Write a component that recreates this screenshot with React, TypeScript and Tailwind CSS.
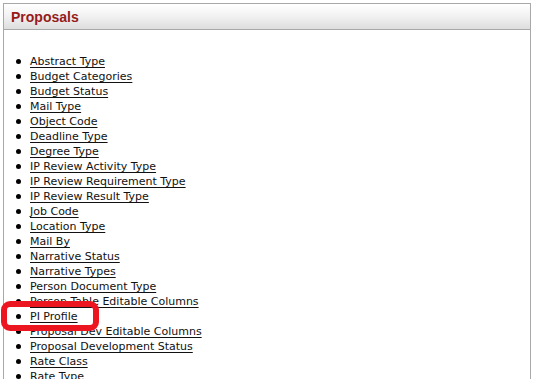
import React from "react";

const items = [
  "Abstract Type",
  "Budget Categories",
  "Budget Status",
  "Mail Type",
  "Object Code",
  "Deadline Type",
  "Degree Type",
  "IP Review Activity Type",
  "IP Review Requirement Type",
  "IP Review Result Type",
  "Job Code",
  "Location Type",
  "Mail By",
  "Narrative Status",
  "Narrative Types",
  "Person Document Type",
  "Person Table Editable Columns",
  "PI Profile",
  "Proposal Dev Editable Columns",
  "Proposal Development Status",
  "Rate Class",
  "Rate Type",
];

export default function App() {
  return (
    <div className="relative w-[541px] h-[379px] overflow-hidden bg-white">
      <div className="ml-[3px] mt-[3px] w-[528px] h-[400px] border border-b-0 border-[#a8a8a8]">
        <div className="h-[26px] flex items-center px-[7px] border-b border-[#a8a8a8] bg-gradient-to-b from-white via-[#f1f1f1] to-[#dedede]">
          <h2 className="font-['Liberation_Sans',Arial,sans-serif] font-bold text-[14px] text-[#961b1b] leading-none">
            Proposals
          </h2>
        </div>
        <ul className="pt-[24px] font-['DejaVu_Sans',Verdana,sans-serif] text-[11px] leading-[15px] text-[#111]">
          {items.map((t) => (
            <li key={t} className="flex items-center h-[15px]">
              <span className="ml-[12px] w-[5px] h-[5px] rounded-full bg-black shrink-0" />
              <a className="ml-[9px] underline underline-offset-[2px] text-[#111] whitespace-nowrap" href="#">
                {t}
              </a>
            </li>
          ))}
        </ul>
      </div>
      <div className="absolute left-[1px] top-[301px] w-[98px] h-[30px] border-[6px] border-[#ec1620] rounded-[9px]" />
    </div>
  );
}
